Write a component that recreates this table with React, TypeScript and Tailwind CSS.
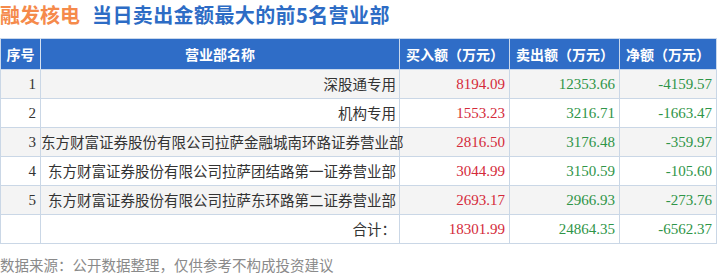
const rows = [
  { no: "1", name: "深股通专用", buy: "8194.09", sell: "12353.66", net: "-4159.57" },
  { no: "2", name: "机构专用", buy: "1553.23", sell: "3216.71", net: "-1663.47" },
  { no: "3", name: "东方财富证券股份有限公司拉萨金融城南环路证券营业部", buy: "2816.50", sell: "3176.48", net: "-359.97" },
  { no: "4", name: "东方财富证券股份有限公司拉萨团结路第一证券营业部", buy: "3044.99", sell: "3150.59", net: "-105.60" },
  { no: "5", name: "东方财富证券股份有限公司拉萨东环路第二证券营业部", buy: "2693.17", sell: "2966.93", net: "-273.76" },
];

const cjk = "font-['Noto_Sans_CJK_SC','Noto_Sans',sans-serif]";
const num = "font-['Liberation_Serif','Noto_Sans_CJK_SC',serif]";

export default function App() {
  return (
    <div className={`relative w-[717px] h-[274px] overflow-hidden bg-white ${cjk}`}>
      {/* title */}
      <div className="flex items-center pt-[2px] text-[20px] font-bold leading-[25px]">
        <span className="text-[#f58a4b]">融发核电</span>
        <span className="ml-[12px] tracking-[0.4px] text-[#2d6cc5]">当日卖出金额最大的前5名营业部</span>
      </div>

      <table className="mt-[11px] w-[716px] border-collapse table-fixed">
        <colgroup>
          <col className="w-[40px]" />
          <col className="w-[359px]" />
          <col className="w-[110px]" />
          <col className="w-[110px]" />
          <col className="w-[97px]" />
        </colgroup>
        <thead>
          <tr className="h-[31px] bg-[#2f6dc7] text-white text-[14px] font-bold leading-none">
            <th className="border border-[#c9d8ec] border-r-[#d6e2f2] font-bold">序号</th>
            <th className="border border-[#c9d8ec] font-bold">营业部名称</th>
            <th className="border border-[#c9d8ec] font-bold text-left pl-[6px] whitespace-nowrap">买入额（万元）</th>
            <th className="border border-[#c9d8ec] font-bold text-left pl-[6px] whitespace-nowrap">卖出额（万元）</th>
            <th className="border border-[#c9d8ec] font-bold text-left pl-[6px] whitespace-nowrap">净额（万元）</th>
          </tr>
        </thead>
        <tbody>
          {rows.map((r, i) => (
            <tr key={r.no} className={`h-[29px] ${i % 2 === 0 ? "bg-[#f4f4f4]" : "bg-white"}`}>
              <td className={`border border-[#cad7e6] text-right pr-[4px] text-[15px] text-[#333] leading-none ${num}`}>{r.no}</td>
              <td className="border border-[#cad7e6] text-right pr-[3px] text-[14.5px] text-[#333] leading-none whitespace-nowrap">{r.name}</td>
              <td className={`border border-[#cad7e6] text-right pr-[4px] text-[15px] text-[#d42a3a] leading-none ${num}`}>{r.buy}</td>
              <td className={`border border-[#cad7e6] text-right pr-[4px] text-[15px] text-[#2f9548] leading-none ${num}`}>{r.sell}</td>
              <td className={`border border-[#cad7e6] text-right pr-[4px] text-[15px] text-[#2f9548] leading-none ${num}`}>{r.net}</td>
            </tr>
          ))}
          <tr className="h-[29px] bg-white">
            <td className="border border-[#cad7e6]" />
            <td className="border border-[#cad7e6] text-right pr-[3px] text-[14.5px] text-[#333] leading-none">合计：</td>
            <td className={`border border-[#cad7e6] text-right pr-[4px] text-[15px] text-[#d42a3a] leading-none ${num}`}>18301.99</td>
            <td className={`border border-[#cad7e6] text-right pr-[4px] text-[15px] text-[#2f9548] leading-none ${num}`}>24864.35</td>
            <td className={`border border-[#cad7e6] text-right pr-[4px] text-[15px] text-[#2f9548] leading-none ${num}`}>-6562.37</td>
          </tr>
        </tbody>
      </table>

      <div className="mt-[14px] text-[14.5px] leading-none text-[#8a8a8a]">数据来源：公开数据整理，仅供参考不构成投资建议</div>
    </div>
  );
}
